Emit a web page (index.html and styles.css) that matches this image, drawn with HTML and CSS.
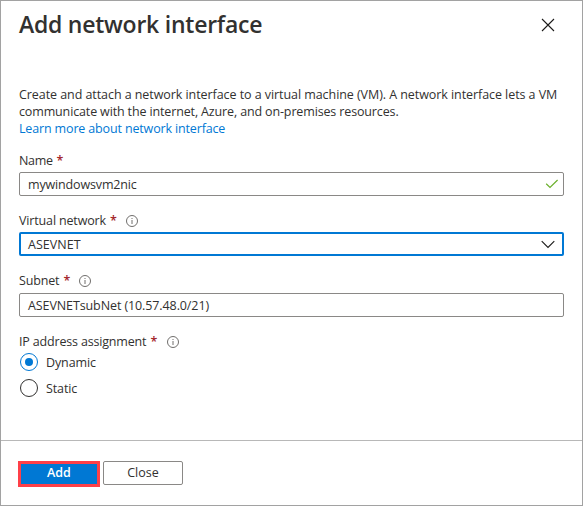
FILE: index.html
```html
<!DOCTYPE html>
<html lang="en">
<head>
<meta charset="utf-8">
<title>Add network interface</title>
<link rel="stylesheet" href="styles.css">
</head>
<body>
<main class="panel">
  <header class="header">
    <h1 class="title">Add network interface</h1>
    <svg class="close-icon" width="14" height="14" viewBox="0 0 14 14"><path d="M1 1l12 12M13 1L1 13"/></svg>
  </header>
  <section class="intro">
    <div class="line line-one">Create and attach a network interface to a virtual machine (VM). A network interface lets a VM</div>
    <div class="line line-two">communicate with the internet, Azure, and on-premises resources.</div>
    <a class="line link">Learn more about network interface</a>
  </section>
  <section class="field">
    <div class="label"><span class="t-name">Name</span><span class="star">*</span></div>
    <div class="input"><span class="v-name">mywindowsvm2nic</span>
      <svg class="check" width="14" height="10" viewBox="0 0 14 10"><path d="M1.200 4.800l3.800 3.600L12.600 1"/></svg>
    </div>
  </section>
  <section class="field field-network">
    <div class="label"><span class="t-network">Virtual network</span><span class="star">*</span>
      <svg class="info" width="12" height="12" viewBox="0 0 12 12"><circle cx="6" cy="6" r="5.500"/><path d="M6 5v4M6 3v1"/></svg>
    </div>
    <div class="input focused"><span class="v-network">ASEVNET</span>
      <svg class="chevron" width="14" height="9" viewBox="0 0 14 9"><path d="M.7 1.200L7 7.500l6.300-6.300"/></svg>
    </div>
  </section>
  <section class="field field-subnet">
    <div class="label"><span class="t-subnet">Subnet</span><span class="star">*</span>
      <svg class="info" width="12" height="12" viewBox="0 0 12 12"><circle cx="6" cy="6" r="5.500"/><path d="M6 5v4M6 3v1"/></svg>
    </div>
    <div class="input"><span class="v-subnet">ASEVNETsubNet (10.57.48.0/21)</span></div>
  </section>
  <section class="field field-ip">
    <div class="label"><span class="t-ip">IP address assignment</span><span class="star">*</span>
      <svg class="info" width="12" height="12" viewBox="0 0 12 12"><circle cx="6" cy="6" r="5.500"/><path d="M6 5v4M6 3v1"/></svg>
    </div>
    <div class="option"><span class="radio checked"></span><span class="t-dynamic">Dynamic</span></div>
    <div class="option"><span class="radio"></span><span class="t-static">Static</span></div>
  </section>
  <footer class="footer">
    <div class="button primary">Add</div>
    <div class="button secondary">Close</div>
  </footer>
</main>
</body>
</html>
```
FILE: styles.css
```css
* { box-sizing: border-box; }
body {
  margin: 0;
  background: #fff;
  color: #323130;
  font: 12.5px/17px "Open Sans", "Noto Sans", sans-serif;
}
.panel {
  width: 583px;
  height: 506px;
  border: 1px solid #a2a2a2;
  display: flex;
  flex-direction: column;
  white-space: nowrap;
}
svg { fill: none; flex: none; }
.header {
  height: 85px;
  padding: 7px 27px 0 18px;
  display: flex;
  justify-content: space-between;
}
.title { margin: 0; font-size: 23px; line-height: 32px; font-weight: 600; letter-spacing: -.24px; }
.close-icon { margin-top: 10px; stroke: #1b1a19; stroke-width: 1.100; }
.intro { padding-left: 18px; height: 66px; }
.line { display: block; }
.line-one { letter-spacing: -.065px; }
.line-two { letter-spacing: -.14px; }
.link { color: #0078d4; letter-spacing: -.15px; }
.field { padding: 0 18px; height: 60px; }
.field-subnet { height: 61px; }
.label { height: 20px; display: flex; align-items: flex-start; }
.field-subnet .label { height: 21px; }
.t-name { letter-spacing: -.35px; }
.t-network { letter-spacing: -.15px; }
.t-subnet { letter-spacing: -.15px; }
.t-ip { letter-spacing: -.17px; }
.v-name { letter-spacing: -.15px; }
.v-network { letter-spacing: .05px; }
.v-subnet { letter-spacing: -.1px; }
.t-dynamic, .t-static { letter-spacing: -.12px; }
.star { color: #a4262c; margin-left: 4px; font-weight: 600; width: 7px; }
.field-ip .star { margin-left: 4px; }
.info { margin: 3px 0 0 9px; stroke: #706e6c; }
.field-ip .info { margin-left: 10px; }
.input {
  height: 24px;
  border: 1px solid #8a8886;
  border-radius: 2px;
  padding: 0 4px 0 8px;
  display: flex;
  align-items: center;
  justify-content: space-between;
}
.focused { border: 2px solid #0078d4; padding: 0 7px 0 7px; }
.check { stroke: #6bb02c; stroke-width: 1.200; }
.chevron { stroke: #1b1a19; stroke-width: 1.100; }
.field-ip { height: 107px; flex: 1; }
.option { display: flex; align-items: center; height: 18px; margin-bottom: 8px; padding-left: 1px; }
.radio {
  width: 18px;
  height: 18px;
  border: 1px solid #323130;
  border-radius: 50%;
  margin-right: 8px;
  display: flex;
  align-items: center;
  justify-content: center;
}
.checked { border-color: #0078d4; }
.checked::before { content: ""; width: 8px; height: 8px; border-radius: 50%; background: #0078d4; }
.footer {
  height: 65px;
  border-top: 1px solid #b8b8b8;
  padding: 20px 17px 0;
  display: flex;
  gap: 3px;
}
.button { height: 24px; width: 80px; text-align: center; line-height: 22px; }
.primary {
  width: 82px;
  height: 26px;
  line-height: 18px;
  border: 3px solid #ff4048;
  background: #0078d4;
  color: #fff;
  font-weight: 600;
}
.secondary { border: 1px solid #8a8886; border-radius: 2px; }
```
